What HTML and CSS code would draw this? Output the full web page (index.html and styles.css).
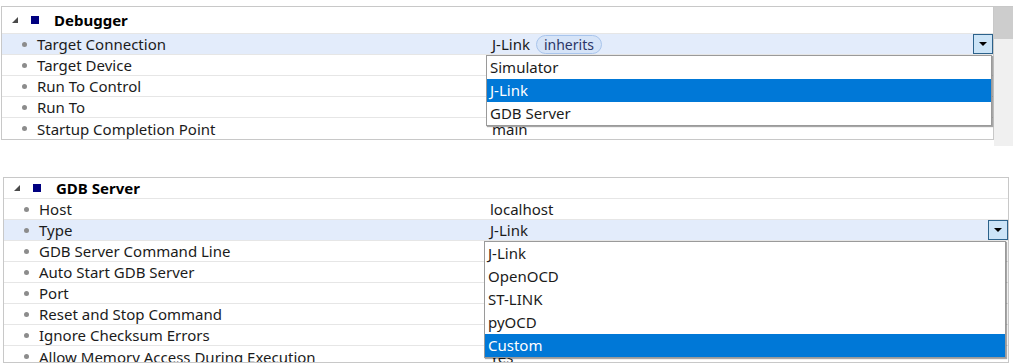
FILE: index.html
```html
<!DOCTYPE html>
<html lang="en">
<head>
  <meta charset="UTF-8" />
  <title>Launch Configuration Properties</title>
  <link rel="stylesheet" href="styles.css">
</head>
<body>
  <!-- Debugger group with scrollbar on the right -->
  <div class="view-top">
    <div class="panel panel-debugger">
      <div class="group-head">
        <span class="twisty"></span>
        <span class="square"></span>
        <span class="group-title">Debugger</span>
      </div>
      <div class="row selected">
        <div class="name"><span class="dot"></span>Target Connection</div>
        <div class="value">
          J-Link <span class="pill">inherits</span>
          <span class="drop"></span>
          <ul class="list">
            <li>Simulator</li>
            <li class="active">J-Link</li>
            <li>GDB Server</li>
          </ul>
        </div>
      </div>
      <div class="row">
        <div class="name"><span class="dot"></span>Target Device</div>
        <div class="value"></div>
      </div>
      <div class="row">
        <div class="name"><span class="dot"></span>Run To Control</div>
        <div class="value"></div>
      </div>
      <div class="row">
        <div class="name"><span class="dot"></span>Run To</div>
        <div class="value"></div>
      </div>
      <div class="row">
        <div class="name"><span class="dot"></span>Startup Completion Point</div>
        <div class="value">main</div>
      </div>
    </div>
    <div class="scrollbar"><div class="thumb"></div></div>
  </div>

  <!-- GDB Server group -->
  <div class="panel panel-gdb">
    <div class="group-head">
      <span class="twisty"></span>
      <span class="square"></span>
      <span class="group-title">GDB Server</span>
    </div>
    <div class="row">
      <div class="name"><span class="dot"></span>Host</div>
      <div class="value">localhost</div>
    </div>
    <div class="row selected">
      <div class="name"><span class="dot"></span>Type</div>
      <div class="value">
        J-Link
        <span class="drop"></span>
        <ul class="list">
          <li>J-Link</li>
          <li>OpenOCD</li>
          <li>ST-LINK</li>
          <li>pyOCD</li>
          <li class="active">Custom</li>
        </ul>
      </div>
    </div>
    <div class="row">
      <div class="name"><span class="dot"></span>GDB Server Command Line</div>
      <div class="value"></div>
    </div>
    <div class="row">
      <div class="name"><span class="dot"></span>Auto Start GDB Server</div>
      <div class="value"></div>
    </div>
    <div class="row">
      <div class="name"><span class="dot"></span>Port</div>
      <div class="value"></div>
    </div>
    <div class="row">
      <div class="name"><span class="dot"></span>Reset and Stop Command</div>
      <div class="value"></div>
    </div>
    <div class="row">
      <div class="name"><span class="dot"></span>Ignore Checksum Errors</div>
      <div class="value"></div>
    </div>
    <div class="row">
      <div class="name"><span class="dot"></span>Allow Memory Access During Execution</div>
      <div class="value">Yes</div>
    </div>
  </div>
</body>
</html>
```

FILE: styles.css
```css
/* Reset */
* {
  margin: 0;
  padding: 0;
  box-sizing: border-box;
}
body {
  font-family: "Noto Sans", "Open Sans", sans-serif;
  font-size: 15px;
  color: #1b1b1b;
  background: #fff;
}
/* Top area: panel + scrollbar */
.view-top {
  display: flex;
  align-items: flex-start;
  margin: 6px 0 0 1px;
  border-top: 1px solid #c8c8c8;
}
.panel {
  border: 1px solid #c8c8c8;
  background: #fff;
}
.panel-debugger {
  width: 993px;
  border-top: 0;
  --name-w: 485px;
  --list-right: 1px;
}
.scrollbar {
  width: 19px;
  height: 139px;
  background: #f0f0f0;
}
.thumb {
  height: 32px;
  background: #cdcdcd;
}
.panel-gdb {
  width: 1006px;
  height: 186px;
  margin: 31px 0 0 3px;
  overflow: hidden;
  --name-w: 481px;
  --list-right: 2px;
}
/* Group header */
.group-head {
  display: flex;
  align-items: center;
  height: 27px;
  border-bottom: 1px solid #e6e6e6;
}
.panel-gdb .group-head {
  height: 21px;
}
.twisty {
  width: 0;
  height: 0;
  margin-left: 10px;
  border-left: 6px solid transparent;
  border-bottom: 6px solid #4a4a4a;
}
.square {
  width: 8px;
  height: 8px;
  margin-left: 13px;
  background: #000080;
}
.group-title {
  margin-left: 15px;
  font-weight: 700;
  color: #000;
}
/* Property rows */
.row {
  display: flex;
  height: 21px;
  border-bottom: 1px solid #e6e6e6;
}
.row:last-child {
  border-bottom: none;
}
.row.selected {
  background: #e3ecfb;
}
.name {
  width: var(--name-w);
  display: flex;
  align-items: center;
  white-space: nowrap;
}
.dot {
  width: 5px;
  height: 5px;
  margin: 0 10px 0 20px;
  border-radius: 50%;
  background: #8c8c8c;
}
.value {
  flex: 1;
  display: flex;
  align-items: center;
  padding-left: 5px;
  position: relative;
  white-space: nowrap;
}
.pill {
  margin-left: 6px;
  height: 19px;
  padding: 0 7px;
  display: flex;
  align-items: center;
  font-size: 14px;
  color: #2b3566;
  background: #d6e4f8;
  border: 1px solid #a9c5ec;
  border-radius: 10px;
}
/* Combo arrow button */
.drop {
  margin-left: auto;
  width: 20px;
  height: 20px;
  background: #cce4f7;
  border: 1px solid #2c628b;
  display: flex;
  align-items: center;
  justify-content: center;
}
.drop::after {
  content: "";
  border-left: 4px solid transparent;
  border-right: 4px solid transparent;
  border-top: 4px solid #000;
}
/* Open dropdown list */
.list {
  list-style: none;
  position: absolute;
  top: calc(100% + 1px);
  left: -1px;
  right: var(--list-right);
  z-index: 2;
  background: #fff;
  border: 1px solid #9a9a9a;
  box-shadow: 1px 1px 1px rgba(0, 0, 0, 0.35);
}
.list li {
  height: 23px;
  line-height: 23px;
  padding-left: 3px;
}
.list li.active {
  background: #0078d7;
  color: #fff;
}
```
